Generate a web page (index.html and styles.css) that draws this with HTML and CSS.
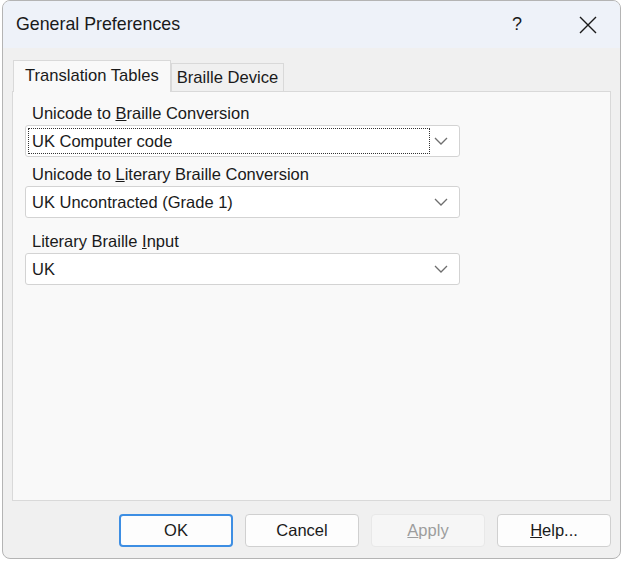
FILE: index.html
```html
<!DOCTYPE html>
<html lang="en">

<head>
    <meta charset="UTF-8">
    <meta name="viewport" content="width=device-width, initial-scale=1.0">
    <title>General Preferences</title>
    <link rel="stylesheet" href="styles.css">
</head>

<body>
    <div class="window">
        <div class="titlebar">
            <span class="title">General Preferences</span>
            <span class="help-btn">?</span>
            <span class="close-btn">
                <svg width="18" height="18" viewBox="0 0 18 18">
                    <path d="M1 1 L17 17 M17 1 L1 17" stroke="#1a1a1a" stroke-width="1.4" fill="none" />
                </svg>
            </span>
        </div>

        <div class="content">
            <div class="tabs">
                <div class="tab active">Translation Tables</div>
                <div class="tab">Braille Device</div>
            </div>

            <div class="panel">
                <div class="field">
                    <div class="label">Unicode to <u>B</u>raille Conversion</div>
                    <div class="combo focused">
                        <span class="value">UK Computer code</span>
                        <svg class="chevron" width="14" height="8" viewBox="0 0 14 8">
                            <path d="M1 1 L7 7 L13 1" stroke="#6e6e6e" stroke-width="1.3" fill="none" />
                        </svg>
                    </div>
                </div>
                <div class="field">
                    <div class="label">Unicode to <u>L</u>iterary Braille Conversion</div>
                    <div class="combo">
                        <span class="value">UK Uncontracted (Grade 1)</span>
                        <svg class="chevron" width="14" height="8" viewBox="0 0 14 8">
                            <path d="M1 1 L7 7 L13 1" stroke="#6e6e6e" stroke-width="1.3" fill="none" />
                        </svg>
                    </div>
                </div>
                <div class="field spaced">
                    <div class="label">Literary Braille <u>I</u>nput</div>
                    <div class="combo">
                        <span class="value">UK</span>
                        <svg class="chevron" width="14" height="8" viewBox="0 0 14 8">
                            <path d="M1 1 L7 7 L13 1" stroke="#6e6e6e" stroke-width="1.3" fill="none" />
                        </svg>
                    </div>
                </div>
            </div>

            <div class="buttons">
                <div class="btn default">OK</div>
                <div class="btn">Cancel</div>
                <div class="btn disabled"><u>A</u>pply</div>
                <div class="btn"><u>H</u>elp...</div>
            </div>
        </div>
    </div>
</body>

</html>
```

FILE: styles.css
```css
body {
    margin: 0;
    font-family: 'Liberation Sans', Arial, sans-serif;
    background-color: #ffffff;
    color: #1a1a1a;
}

.window {
    margin-left: 2px;
    width: 617px;
    height: 557px;
    border: 1px solid #b4b4b4;
    border-radius: 8px;
    background-color: #f0f0f0;
    overflow: hidden;
}

.titlebar {
    height: 47px;
    background-color: #eef2f9;
    display: flex;
    align-items: center;
    padding-left: 13px;
}

.title {
    font-size: 17.8px;
    flex: 1;
}

.help-btn {
    font-size: 18px;
    width: 62px;
    text-align: center;
    margin-right: 12px;
}

.close-btn {
    width: 56px;
    display: flex;
    justify-content: center;
    padding-right: 4px;
}

.content {
    padding: 12px 9px 0 9px;
}

.tabs {
    display: flex;
    align-items: flex-end;
    padding-left: 1px;
    position: relative;
    z-index: 1;
}

.tab {
    font-size: 16.6px;
    height: 27px;
    line-height: 27px;
    padding: 0 5px;
    border: 1px solid #d9d9d9;
    border-bottom: none;
    background-color: #f0f0f0;
}

.tab.active {
    height: 31px;
    line-height: 29px;
    padding: 0 11px;
    background-color: #f9f9f9;
    margin-bottom: -1px;
}

.panel {
    height: 399px;
    border: 1px solid #d9d9d9;
    background-color: #f9f9f9;
    padding: 9px 12px 0 12px;
}

.field .label {
    font-size: 16.5px;
    padding-left: 7px;
    height: 24px;
    line-height: 24px;
}

.field.spaced {
    margin-top: 11px;
}

.combo {
    width: 433px;
    height: 30px;
    border: 1px solid #d3d3d3;
    border-radius: 3px;
    background-color: #ffffff;
    display: flex;
    align-items: center;
    position: relative;
    margin-bottom: 5px;
}

.combo .value {
    font-size: 16.5px;
    padding-left: 6px;
    flex: 1;
}

.combo .chevron {
    margin-right: 11px;
}

/* focus rectangle on the active combo */
.combo.focused::after {
    content: "";
    position: absolute;
    left: 2px;
    top: 2px;
    width: 400px;
    height: 24px;
    border: 1px dotted #333;
}

.buttons {
    display: flex;
    justify-content: flex-end;
    gap: 12px;
    margin-top: 13px;
}

.btn {
    width: 112px;
    height: 31px;
    line-height: 31px;
    text-align: center;
    font-size: 16.5px;
    border: 1px solid #d0d0d0;
    border-radius: 4px;
    background-color: #fdfdfd;
}

.btn.default {
    width: 110px;
    height: 29px;
    line-height: 29px;
    border: 2px solid #3d8ee3;
}

.btn.disabled {
    color: #9d9d9d;
    background-color: #f6f6f6;
    border-color: #e8e8e8;
}
```
